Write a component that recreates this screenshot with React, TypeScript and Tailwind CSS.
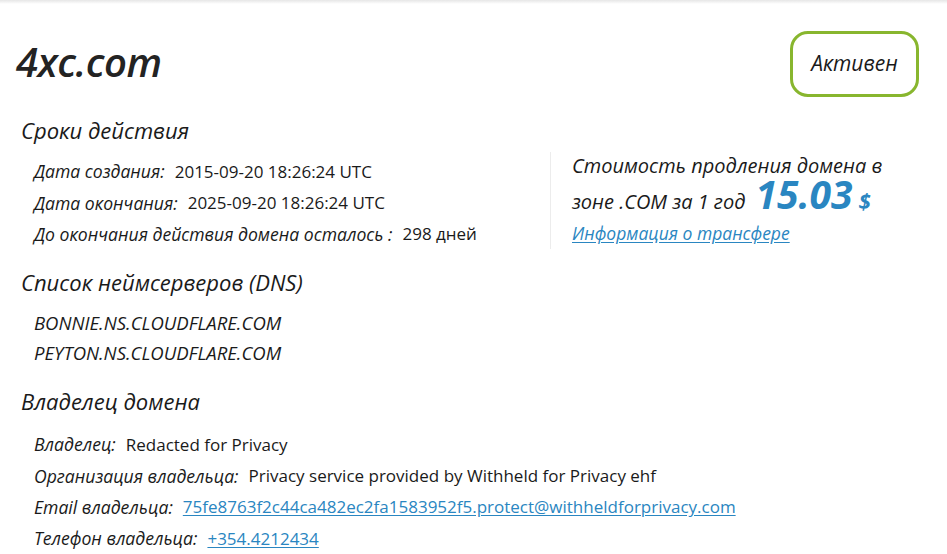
const labelFont = "font-['Open_Sans',sans-serif] italic";
const valueFont = "font-['Open_Sans',sans-serif]";

const Row = ({ label, children }: { label: string; children: React.ReactNode }) => (
  <div className="flex h-[31.3px] items-center whitespace-nowrap text-[#1a1a1a]">
    <span className={`${labelFont} text-[17.6px]`}>{label}</span>
    <span className={`${valueFont} ml-[10px] text-[17px]`}>{children}</span>
  </div>
);

const Heading = ({ children, className = "" }: { children: React.ReactNode; className?: string }) => (
  <h2 className={`${labelFont} pl-[21px] text-[22px] leading-[26px] text-[#1a1a1a] ${className}`}>{children}</h2>
);

const Link = ({ children }: { children: React.ReactNode }) => (
  <a href="#" className="text-[#2a86c1] underline underline-offset-2">
    {children}
  </a>
);

export default function App() {
  return (
    <div className="h-[554px] w-[947px] overflow-hidden bg-white">
      <div className="h-[4px] bg-gradient-to-b from-[#e6e6e6] to-white" />

      <div className="mt-[27px] flex items-center justify-between pl-[16px] pr-[28px]">
        <h1 className={`${labelFont} -mt-[4px] text-[40px] font-semibold leading-[44px] tracking-[-0.5px] text-[#232323]`}>4xc.com</h1>
        <div className="flex h-[66px] w-[129px] items-center justify-center rounded-[18px] border-[3px] border-[#88b62e]">
          <span className={`${labelFont} text-[21px] text-[#1a1a1a]`}>Активен</span>
        </div>
      </div>

      <Heading className="mt-[20px]">Сроки действия</Heading>

      <div className="mt-[9px] flex">
        <div className="w-[550px] pl-[34px] pt-[4px]">
          <Row label="Дата создания:">2015-09-20 18:26:24 UTC</Row>
          <Row label="Дата окончания:">2025-09-20 18:26:24 UTC</Row>
          <Row label="До окончания действия домена осталось :">298 дней</Row>
        </div>
        <div className="h-[97px] border-l border-[#ececec] pl-[21px] text-[#1a1a1a]">
          <div className={`${labelFont} text-[20px] leading-[28px]`}>Стоимость продления домена в</div>
          <div className="-mt-[3px] flex h-[34px] items-baseline">
            <span className={`${labelFont} text-[20px] leading-[34px]`}>зоне .COM за 1 год</span>
            <span className={`${labelFont} ml-[10px] text-[39px] font-bold leading-[34px] text-[#2a86c1]`}>15.03</span>
            <span className={`${labelFont} ml-[6px] text-[22px] font-bold leading-[34px] text-[#2a86c1]`}>$</span>
          </div>
          <div className={`${labelFont} mt-[10px] text-[17.5px] leading-[24px]`}>
            <Link>Информация о трансфере</Link>
          </div>
        </div>
      </div>

      <Heading className="mt-[19px]">Список неймсерверов (DNS)</Heading>
      <div className="mt-[13px] pl-[34px]">
        <div className={`${labelFont} flex h-[30px] items-center text-[18.5px] text-[#1a1a1a]`}>BONNIE.NS.CLOUDFLARE.COM</div>
        <div className={`${labelFont} flex h-[30px] items-center text-[18.5px] text-[#1a1a1a]`}>PEYTON.NS.CLOUDFLARE.COM</div>
      </div>

      <Heading className="mt-[20px]">Владелец домена</Heading>
      <div className="mt-[15px] pl-[34px]">
        <Row label="Владелец:">Redacted for Privacy</Row>
        <Row label="Организация владельца:">Privacy service provided by Withheld for Privacy ehf</Row>
        <Row label="Email владельца:">
          <Link>75fe8763f2c44ca482ec2fa1583952f5.protect@withheldforprivacy.com</Link>
        </Row>
        <Row label="Телефон владельца:">
          <Link>+354.4212434</Link>
        </Row>
      </div>
    </div>
  );
}
